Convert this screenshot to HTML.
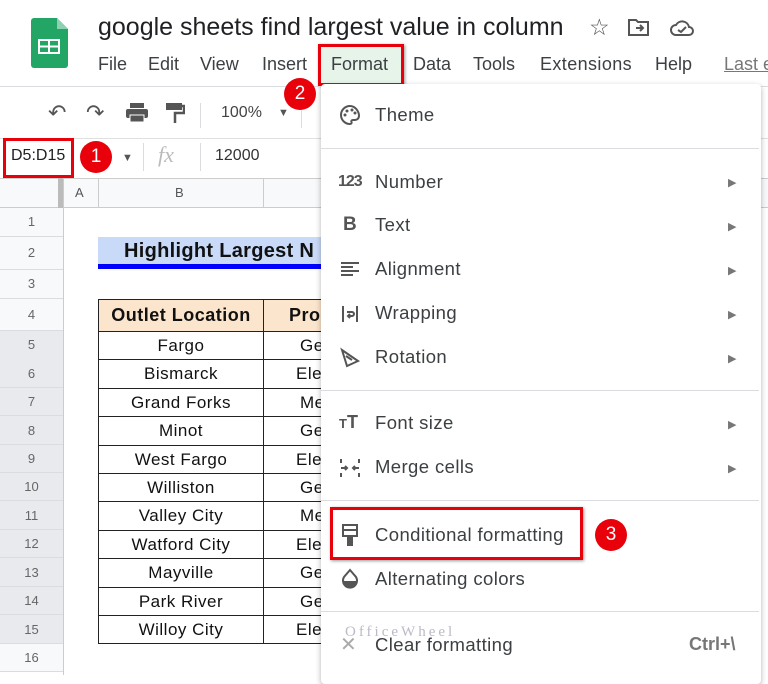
<!DOCTYPE html>
<html><head><meta charset="utf-8"><style>
*{box-sizing:border-box;margin:0;padding:0}
body{width:768px;height:675px;overflow:hidden;background:#fff;font-family:"Liberation Sans",Arial,sans-serif;position:relative;color:#202124}
.a{position:absolute}
.rn{position:absolute;left:0;width:63px;text-align:center;font-size:13px;color:#666;border-bottom:1px solid #dadce0;background:#f8f9fa}
.rn.s{background:#e8eaed}
.cell{position:absolute;border:1px solid #222;font-size:17px;text-align:center;color:#111;letter-spacing:0.5px;white-space:nowrap;overflow:hidden}
.mi{position:absolute;left:375px;font-size:18.5px;color:#3c4043;letter-spacing:0.4px}
.ar{position:absolute;left:728px;font-size:11px;color:#777}
.sep{position:absolute;left:321px;width:438px;height:1px;background:#dadce0}
.ic{position:absolute;left:338px;width:24px;height:24px}
.badge{position:absolute;width:32px;height:32px;border-radius:50%;background:#e8000b;color:#fff;font-size:19px;text-align:center;line-height:32px}
</style></head><body>
<svg class="a" style="left:31px;top:18px" width="37" height="50" viewBox="0 0 37 50"><path d="M3 0h23l11 11v36a3 3 0 0 1-3 3H3a3 3 0 0 1-3-3V3a3 3 0 0 1 3-3z" fill="#23a566"/><path d="M26 0l11 11H26z" fill="#8ed1b1"/><rect x="7" y="21" width="22" height="15" fill="#fff"/><rect x="9" y="23" width="8" height="4.5" fill="#23a566"/><rect x="19" y="23" width="8" height="4.5" fill="#23a566"/><rect x="9" y="29.5" width="8" height="4.5" fill="#23a566"/><rect x="19" y="29.5" width="8" height="4.5" fill="#23a566"/></svg>
<div class="a" style="left:98px;top:13px;font-size:25px;color:#202124">google sheets find largest value in column</div>
<div class="a" style="left:589px;top:14px;font-size:23px;color:#555">☆</div>
<svg class="a" style="left:628px;top:18px" width="22" height="18" viewBox="0 0 22 18"><path d="M1 2h7l2 2h10v13H1z" fill="none" stroke="#555" stroke-width="2"/><path d="M8 10h7M12 7l3 3-3 3" fill="none" stroke="#555" stroke-width="2"/></svg>
<svg class="a" style="left:670px;top:19px" width="24" height="17" viewBox="0 0 24 17"><path d="M6 16a5 5 0 0 1 0-10 7 7 0 0 1 13 2 4 4 0 0 1 0 8z" fill="none" stroke="#555" stroke-width="2"/><path d="M8 11l3 2 5-5" fill="none" stroke="#555" stroke-width="2"/></svg>
<div class="a" style="top:54px;left:98px;font-size:18px;color:#3c4043;white-space:nowrap">File</div>
<div class="a" style="top:54px;left:148px;font-size:18px;color:#3c4043">Edit</div>
<div class="a" style="top:54px;left:200px;font-size:18px;color:#3c4043">View</div>
<div class="a" style="top:54px;left:262px;font-size:18px;color:#3c4043">Insert</div>
<div class="a" style="top:44px;left:318px;width:86px;height:42px;background:#e6f4ea;border:3px solid #e8000b;box-shadow:1px 1px 3px #999"></div>
<div class="a" style="top:54px;left:331px;font-size:18px;color:#3c4043">Format</div>
<div class="a" style="top:54px;left:413px;font-size:18px;color:#3c4043">Data</div>
<div class="a" style="top:54px;left:473px;font-size:18px;color:#3c4043">Tools</div>
<div class="a" style="top:54px;left:540px;font-size:18px;color:#3c4043;letter-spacing:0.4px">Extensions</div>
<div class="a" style="top:54px;left:655px;font-size:18px;color:#3c4043">Help</div>
<div class="a" style="top:54px;left:724px;font-size:18px;color:#777;text-decoration:underline;white-space:nowrap">Last e</div>
<div class="a" style="top:86px;left:0;width:768px;height:1px;background:#dadce0"></div>
<div class="a" style="top:100px;left:48px;font-size:22px;color:#555">↶</div>
<div class="a" style="top:100px;left:86px;font-size:22px;color:#555">↷</div>
<svg class="a" style="left:125px;top:103px" width="24" height="20"><rect x="5" y="0" width="14" height="5" fill="#555"/><rect x="1" y="6" width="22" height="9" rx="2" fill="#555"/><rect x="5" y="12" width="14" height="7" fill="#555" stroke="#fff" stroke-width="1"/></svg>
<svg class="a" style="left:165px;top:102px" width="20" height="22"><rect x="1" y="1" width="16" height="7" fill="#555"/><path d="M17 4h2v7h-9v10" fill="none" stroke="#555" stroke-width="2.5"/></svg>
<div class="a" style="top:103px;left:200px;width:1px;height:25px;background:#dadce0"></div>
<div class="a" style="top:104px;left:221px;font-size:16px;color:#444">100%</div>
<div class="a" style="top:107px;left:278px;font-size:11px;color:#555">▼</div>
<div class="a" style="top:103px;left:301px;width:1px;height:25px;background:#dadce0"></div>
<div class="badge" style="left:284px;top:78px">2</div>
<div class="a" style="top:138px;left:0;width:768px;height:1px;background:#e0e0e0"></div>
<div class="a" style="top:138px;left:3px;width:71px;height:40px;border:3px solid #e8000b;background:#fff"></div>
<div class="a" style="top:147px;left:11px;font-size:16px;color:#202124">D5:D15</div>
<div class="badge" style="left:80px;top:141px">1</div>
<div class="a" style="top:152px;left:122px;font-size:11px;color:#555">▼</div>
<div class="a" style="top:143px;left:143px;width:1px;height:28px;background:#dadce0"></div>
<div class="a" style="top:142px;left:158px;font-size:22px;font-style:italic;font-family:'Liberation Serif',serif;color:#bbb">fx</div>
<div class="a" style="top:143px;left:200px;width:1px;height:28px;background:#dadce0"></div>
<div class="a" style="top:147px;left:215px;font-size:16px;color:#333">12000</div>
<div class="a" style="top:178px;left:0;width:768px;height:30px;background:#f8f9fa;border-top:1px solid #ccc;border-bottom:1px solid #ccc"></div>
<div class="a" style="top:178px;left:58px;width:5px;height:30px;background:#bbb"></div>
<div class="a" style="top:178px;left:63px;width:1px;height:497px;background:#ccc"></div>
<div class="a" style="top:178px;left:98px;width:1px;height:30px;background:#ccc"></div>
<div class="a" style="top:178px;left:263px;width:1px;height:30px;background:#ccc"></div>
<div class="a" style="top:185px;left:75px;font-size:13px;color:#555">A</div>
<div class="a" style="top:185px;left:175px;font-size:13px;color:#555">B</div>
<div class="rn" style="top:208px;height:29px;line-height:28px">1</div>
<div class="rn" style="top:237px;height:33px;line-height:32px">2</div>
<div class="rn" style="top:270px;height:29px;line-height:28px">3</div>
<div class="rn" style="top:299px;height:32px;line-height:31px">4</div>
<div class="rn s" style="top:331px;height:29px;line-height:28px">5</div>
<div class="rn s" style="top:359px;height:29px;line-height:29px">6</div>
<div class="rn s" style="top:388px;height:28px;line-height:28px">7</div>
<div class="rn s" style="top:416px;height:29px;line-height:29px">8</div>
<div class="rn s" style="top:445px;height:28px;line-height:28px">9</div>
<div class="rn s" style="top:473px;height:28px;line-height:28px">10</div>
<div class="rn s" style="top:501px;height:29px;line-height:29px">11</div>
<div class="rn s" style="top:530px;height:28px;line-height:28px">12</div>
<div class="rn s" style="top:558px;height:29px;line-height:29px">13</div>
<div class="rn s" style="top:587px;height:28px;line-height:28px">14</div>
<div class="rn s" style="top:615px;height:29px;line-height:29px">15</div>
<div class="rn" style="top:644px;height:28px;line-height:28px">16</div>
<div class="a" style="top:237px;left:98px;width:240px;height:32px;background:#c9daf8;border-bottom:5px solid #0000ff"></div>
<div class="a" style="top:240px;left:124px;font-size:20px;font-weight:bold;color:#111;white-space:nowrap;letter-spacing:0.3px">Highlight Largest N</div>
<div class="cell" style="top:299px;left:98px;width:166px;height:33px;background:#fce5cd;font-weight:bold;font-size:18px;line-height:31px">Outlet Location</div>
<div class="cell" style="top:299px;left:263px;width:80px;height:33px;background:#fce5cd;font-weight:bold;font-size:18px;line-height:31px;text-align:left;padding-left:25px">Pro</div>
<div class="cell" style="top:331px;left:98px;width:166px;height:29.4px;line-height:27px">Fargo</div>
<div class="cell" style="top:359.4px;left:98px;width:166px;height:29.4px;line-height:27px">Bismarck</div>
<div class="cell" style="top:387.8px;left:98px;width:166px;height:29.4px;line-height:27px">Grand Forks</div>
<div class="cell" style="top:416.2px;left:98px;width:166px;height:29.4px;line-height:27px">Minot</div>
<div class="cell" style="top:444.6px;left:98px;width:166px;height:29.4px;line-height:27px">West Fargo</div>
<div class="cell" style="top:473px;left:98px;width:166px;height:29.4px;line-height:27px">Williston</div>
<div class="cell" style="top:501.4px;left:98px;width:166px;height:29.4px;line-height:27px">Valley City</div>
<div class="cell" style="top:529.8px;left:98px;width:166px;height:29.4px;line-height:27px">Watford City</div>
<div class="cell" style="top:558.2px;left:98px;width:166px;height:29.4px;line-height:27px">Mayville</div>
<div class="cell" style="top:586.6px;left:98px;width:166px;height:29.4px;line-height:27px">Park River</div>
<div class="cell" style="top:615px;left:98px;width:166px;height:29.4px;line-height:27px">Willoy City</div>
<div class="cell" style="top:331px;left:263px;width:80px;height:29.4px;line-height:27px;text-align:left;padding-left:36px">Ge</div>
<div class="cell" style="top:359.4px;left:263px;width:80px;height:29.4px;line-height:27px;text-align:left;padding-left:32px">Ele</div>
<div class="cell" style="top:387.8px;left:263px;width:80px;height:29.4px;line-height:27px;text-align:left;padding-left:36px">Me</div>
<div class="cell" style="top:416.2px;left:263px;width:80px;height:29.4px;line-height:27px;text-align:left;padding-left:36px">Ge</div>
<div class="cell" style="top:444.6px;left:263px;width:80px;height:29.4px;line-height:27px;text-align:left;padding-left:32px">Ele</div>
<div class="cell" style="top:473px;left:263px;width:80px;height:29.4px;line-height:27px;text-align:left;padding-left:36px">Ge</div>
<div class="cell" style="top:501.4px;left:263px;width:80px;height:29.4px;line-height:27px;text-align:left;padding-left:36px">Me</div>
<div class="cell" style="top:529.8px;left:263px;width:80px;height:29.4px;line-height:27px;text-align:left;padding-left:32px">Ele</div>
<div class="cell" style="top:558.2px;left:263px;width:80px;height:29.4px;line-height:27px;text-align:left;padding-left:36px">Ge</div>
<div class="cell" style="top:586.6px;left:263px;width:80px;height:29.4px;line-height:27px;text-align:left;padding-left:36px">Ge</div>
<div class="cell" style="top:615px;left:263px;width:80px;height:29.4px;line-height:27px;text-align:left;padding-left:32px">Ele</div>
<div class="a" style="top:84px;left:321px;width:440px;height:600px;background:#fff;box-shadow:0 2px 6px rgba(0,0,0,.3);border-radius:4px"></div>
<svg class="ic" style="top:103px" viewBox="0 0 24 24"><path d="M12 3a9 9 0 0 0 0 18c1.5 0 2-1 1.5-2s0-2 1.5-2h2a4 4 0 0 0 4-4c0-5-4-10-9-10z" fill="none" stroke="#555" stroke-width="2"/><circle cx="7" cy="12" r="1.5" fill="#555"/><circle cx="9" cy="8" r="1.5" fill="#555"/><circle cx="14" cy="7" r="1.5" fill="#555"/><circle cx="17" cy="10" r="1.5" fill="#555"/></svg>
<div class="mi" style="top:104px">Theme</div>
<div class="sep" style="top:148px"></div>
<div class="a" style="top:173px;left:338px;font-size:16px;font-weight:bold;color:#555;letter-spacing:-1px">123</div>
<div class="mi" style="top:171px">Number</div><div class="ar" style="top:176px">▶</div>
<div class="a" style="top:214px;left:343px;font-size:19px;font-weight:bold;color:#555">B</div>
<div class="mi" style="top:214px">Text</div><div class="ar" style="top:220px">▶</div>
<svg class="ic" style="top:258px" viewBox="0 0 24 24"><path d="M3 5h18M3 9h12M3 13h18M3 17h12" stroke="#555" stroke-width="2"/></svg>
<div class="mi" style="top:258px">Alignment</div><div class="ar" style="top:264px">▶</div>
<svg class="ic" style="top:302px" viewBox="0 0 24 24"><path d="M5 4v16M19 4v16M9 10h5a2 2 0 0 1 0 4h-4M12 12l-2 2 2 2" fill="none" stroke="#555" stroke-width="2"/></svg>
<div class="mi" style="top:302px">Wrapping</div><div class="ar" style="top:308px">▶</div>
<svg class="ic" style="top:346px" viewBox="0 0 24 24"><path d="M4 4l5 16 11-5zM8 10l6 4" fill="none" stroke="#555" stroke-width="2"/></svg>
<div class="mi" style="top:346px">Rotation</div><div class="ar" style="top:352px">▶</div>
<div class="sep" style="top:390px"></div>
<div class="a" style="top:412px;left:339px;font-size:18px;font-weight:bold;color:#555"><span style="font-size:13px">T</span>T</div>
<div class="mi" style="top:412px">Font size</div><div class="ar" style="top:418px">▶</div>
<svg class="ic" style="top:456px" viewBox="0 0 24 24"><path d="M3 3v4M3 17v4M21 3v4M21 17v4M3 12h6M7 10l2 2-2 2M21 12h-6M17 10l-2 2 2 2" fill="none" stroke="#555" stroke-width="2"/></svg>
<div class="mi" style="top:456px">Merge cells</div><div class="ar" style="top:462px">▶</div>
<div class="sep" style="top:500px"></div>
<div class="a" style="top:507px;left:330px;width:253px;height:53px;border:3px solid #e8000b;box-shadow:1px 1px 3px #999"></div>
<svg class="ic" style="top:523px" viewBox="0 0 24 24"><rect x="5" y="2" width="14" height="11" fill="none" stroke="#555" stroke-width="2"/><path d="M5 7h14M10 13v9h4v-9" fill="#555" stroke="#555" stroke-width="2"/></svg>
<div class="mi" style="top:524px">Conditional formatting</div>
<div class="badge" style="left:595px;top:519px">3</div>
<svg class="ic" style="top:567px" viewBox="0 0 24 24"><path d="M12 3l6 7a7 7 0 1 1-12 0z" fill="none" stroke="#555" stroke-width="2"/><path d="M5 14h14a7 7 0 0 1-14 0z" fill="#555"/></svg>
<div class="mi" style="top:568px">Alternating colors</div>
<div class="sep" style="top:611px"></div>
<div class="a" style="top:632px;left:340px;font-size:20px;color:#aaa">✕</div>
<div class="mi" style="top:634px">Clear formatting</div>
<div class="a" style="top:634px;left:689px;font-size:18px;font-weight:bold;color:#777">Ctrl+\</div>
<div class="a" style="top:624px;left:345px;font-size:15px;color:#aab;letter-spacing:3px;font-family:'Liberation Serif',serif;opacity:.8">OfficeWheel</div>
</body></html>
